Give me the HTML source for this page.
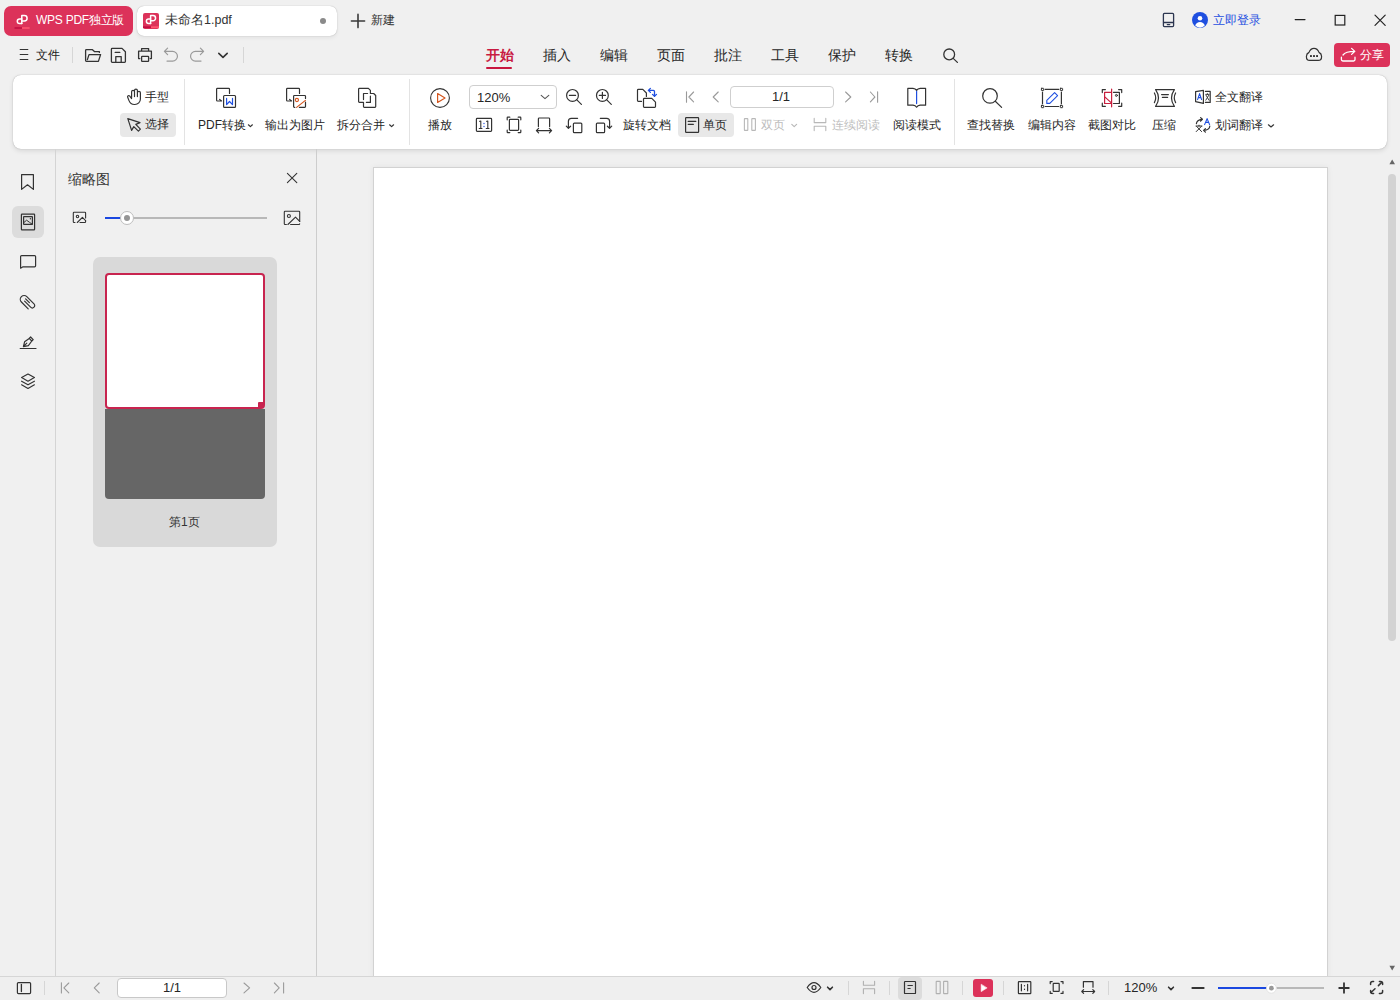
<!DOCTYPE html>
<html><head><meta charset="utf-8">
<style>
html,body{margin:0;padding:0}
body{width:1400px;height:1000px;overflow:hidden;position:relative;background:#f0f0f0;font-family:"Liberation Sans",sans-serif;color:#262626}
.a{position:absolute}
.t{position:absolute;white-space:nowrap;line-height:16px}
.f12{font-size:12px}.f13{font-size:13px}.f14{font-size:14px}
svg{position:absolute;overflow:visible}
.s{fill:none;stroke:#333;stroke-width:1.2}
.sep{position:absolute;width:1px;background:#d6d6d6}
</style></head><body>

<!-- ===== TITLE BAR ===== -->
<div class="a" style="left:4px;top:6px;width:129px;height:30px;border-radius:7px;background:#dc325a"></div>
<div class="t f12" style="left:36px;top:12px;color:#fff;letter-spacing:-0.25px">WPS PDF独立版</div>
<div class="a" style="left:137px;top:6px;width:200px;height:30px;border-radius:7px;background:#fff;box-shadow:0 0 1px rgba(0,0,0,.34),0 2px 4px rgba(0,0,0,.06)"></div>
<div class="t" style="left:165px;top:12px;color:#333;font-size:12.5px">未命名1.pdf</div>
<div class="a" style="left:320px;top:18px;width:6px;height:6px;border-radius:3px;background:#8a8a8a"></div>
<div class="t" style="left:371px;top:12px;color:#333;font-size:12px">新建</div>
<div class="t f12" style="left:1213px;top:12px;color:#1f4fe0">立即登录</div>

<!-- ===== MENU ROW ===== -->
<div class="t" style="left:36px;top:47px;color:#222;font-size:12px">文件</div>
<div class="sep" style="left:72px;top:47px;height:16px"></div>
<div class="sep" style="left:243px;top:47px;height:16px"></div>
<div class="t f14" style="left:486px;top:47px;color:#c81a42;font-weight:bold">开始</div>
<div class="a" style="left:486px;top:67px;width:26px;height:2px;background:#c8173f;border-radius:1px"></div>
<div class="t f14" style="left:543px;top:47px">插入</div>
<div class="t f14" style="left:600px;top:47px">编辑</div>
<div class="t f14" style="left:657px;top:47px">页面</div>
<div class="t f14" style="left:714px;top:47px">批注</div>
<div class="t f14" style="left:771px;top:47px">工具</div>
<div class="t f14" style="left:828px;top:47px">保护</div>
<div class="t f14" style="left:885px;top:47px">转换</div>
<div class="a" style="left:1334px;top:43px;width:56px;height:24px;border-radius:4px;background:#dc325a"></div>
<div class="t f12" style="left:1360px;top:47px;color:#fff">分享</div>

<!-- ===== RIBBON ===== -->
<div class="a" style="left:13px;top:75px;width:1374px;height:74px;border-radius:8px;background:#fff;box-shadow:0 0 1px rgba(0,0,0,.36),0 2px 5px rgba(0,0,0,.1)"></div>
<div class="a" style="left:120px;top:113px;width:56px;height:24px;border-radius:4px;background:#e8e8e8"></div>
<div class="t f12" style="left:145px;top:89px">手型</div>
<div class="t f12" style="left:145px;top:116px">选择</div>
<div class="sep" style="left:184px;top:79px;height:66px;background:#e3e3e3"></div>
<div class="t f12" style="left:198px;top:117px">PDF转换</div>
<div class="t f12" style="left:265px;top:117px">输出为图片</div>
<div class="t f12" style="left:337px;top:117px">拆分合并</div>
<div class="sep" style="left:409px;top:79px;height:66px;background:#e3e3e3"></div>
<div class="t f12" style="left:428px;top:117px">播放</div>
<div class="a" style="left:469px;top:85px;width:86px;height:22px;border:1px solid #cfcfcf;border-radius:4px;background:#fff"></div>
<div class="t f13" style="left:477px;top:90px">120%</div>
<div class="t f12" style="left:623px;top:117px">旋转文档</div>
<div class="a" style="left:730px;top:86px;width:102px;height:20px;border:1px solid #cfcfcf;border-radius:4px;background:#fff"></div>
<div class="t f13" style="left:772px;top:89px">1/1</div>
<div class="a" style="left:678px;top:113px;width:56px;height:24px;border-radius:4px;background:#e8e8e8"></div>
<div class="t f12" style="left:703px;top:117px">单页</div>
<div class="t f12" style="left:761px;top:117px;color:#bdbdbd">双页</div>
<div class="t f12" style="left:832px;top:117px;color:#bdbdbd">连续阅读</div>
<div class="t f12" style="left:893px;top:117px">阅读模式</div>
<div class="sep" style="left:954px;top:79px;height:66px;background:#e3e3e3"></div>
<div class="t f12" style="left:967px;top:117px">查找替换</div>
<div class="t f12" style="left:1028px;top:117px">编辑内容</div>
<div class="t f12" style="left:1088px;top:117px">截图对比</div>
<div class="t f12" style="left:1152px;top:117px">压缩</div>
<div class="t f12" style="left:1215px;top:89px">全文翻译</div>
<div class="t f12" style="left:1215px;top:117px">划词翻译</div>

<!-- ===== LEFT SIDEBAR ===== -->
<div class="a" style="left:55px;top:149px;width:1px;height:827px;background:#d4d4d4"></div>
<div class="a" style="left:12px;top:206px;width:32px;height:32px;border-radius:6px;background:#dcdcdc"></div>

<!-- ===== THUMB PANEL ===== -->
<div class="a" style="left:316px;top:149px;width:1px;height:827px;background:#cdcdcd"></div>
<div class="t f14" style="left:68px;top:171px;color:#333">缩略图</div>
<div class="a" style="left:105px;top:217px;width:162px;height:2px;background:#b8b8b8"></div>
<div class="a" style="left:105px;top:217px;width:20px;height:2px;background:#1a47e0"></div>
<div class="a" style="left:120px;top:211px;width:12px;height:12px;border-radius:7px;border:1px solid #bdbdbd;background:#fff"></div>
<div class="a" style="left:124px;top:215px;width:6px;height:6px;border-radius:3px;background:#959595"></div>
<div class="a" style="left:93px;top:257px;width:184px;height:290px;border-radius:7px;background:#d9d9d9"></div>
<div class="a" style="left:105px;top:409px;width:160px;height:90px;border-radius:0 0 4px 4px;background:#666"></div>
<div class="a" style="left:105px;top:273px;width:156px;height:132px;border:2px solid #c8244f;border-radius:4px;background:#fff"></div>
<div class="t f12" style="left:169px;top:514px;color:#333">第1页</div>

<!-- ===== DOC AREA ===== -->
<div class="a" style="left:373px;top:167px;width:953px;height:820px;border:1px solid #d2d2d2;background:#fff;box-shadow:0 0 6px rgba(0,0,0,.06)"></div>
<div class="a" style="left:1388px;top:174px;width:8px;height:467px;border-radius:4px;background:#d3d3d3"></div>

<!-- ===== STATUS BAR ===== -->
<div class="a" style="left:0;top:976px;width:1400px;height:24px;background:#efefef;border-top:1px solid #d6d6d6"></div>
<div class="a" style="left:117px;top:978px;width:108px;height:18px;border:1px solid #c8c8c8;border-radius:4px;background:#fff"></div>
<div class="t f13" style="left:163px;top:980px">1/1</div>
<div class="sep" style="left:44px;top:981px;height:14px"></div><div class="sep" style="left:848px;top:981px;height:14px"></div><div class="sep" style="left:889px;top:981px;height:14px"></div><div class="sep" style="left:962px;top:981px;height:14px"></div><div class="sep" style="left:1003px;top:981px;height:14px"></div><div class="sep" style="left:1108px;top:981px;height:14px"></div>
<div class="a" style="left:898px;top:977px;width:24px;height:23px;border-radius:4px;background:#dcdcdc"></div>
<div class="a" style="left:973px;top:979px;width:20px;height:18px;border-radius:3px;background:#dc325a"></div>
<div class="t f13" style="left:1124px;top:980px">120%</div>
<div class="a" style="left:1218px;top:987px;width:106px;height:2px;background:#b8b8b8"></div>
<div class="a" style="left:1218px;top:987px;width:52px;height:2px;background:#1a47e0"></div>


<svg width="1400" height="1000" viewBox="0 0 1400 1000" style="left:0;top:0" fill="none" stroke-linecap="round" stroke-linejoin="round">
<!-- title: red tab logo -->
<g stroke="#fff" stroke-width="1.5">
<path d="M21.8 23.6 V15.6 H24.4 A2.7 2.7 0 0 1 24.4 21 H21.8"/>
<path d="M21.8 23.6 H19.6 A2.3 2.3 0 0 1 19.6 19 H21.8"/>
</g>
<path d="M14.5 28 H22" stroke="#c20d42" stroke-width="1.6" stroke-linecap="butt"/>
<path d="M22 28 H29.6" stroke="#ff5470" stroke-width="1.6" stroke-linecap="butt"/>
<!-- white tab icon -->
<rect x="143" y="13" width="16" height="16" rx="2" fill="#dc325a" stroke="none"/>
<path d="M143 27.2 H151" stroke="#c20d42" stroke-width="1.8" stroke-linecap="butt"/>
<path d="M151 27.2 H159" stroke="#ff5470" stroke-width="1.8" stroke-linecap="butt"/>
<g stroke="#fff" stroke-width="1.5">
<path d="M150.6 23.4 V15.6 H153 A2.55 2.55 0 0 1 153 20.7 H150.6"/>
<path d="M150.6 23.4 H148.6 A2.2 2.2 0 0 1 148.6 19 H150.6"/>
</g>
<!-- plus -->
<path d="M358 14.4 V27.6 M351.4 21 H364.6" stroke="#3a3a3a" stroke-width="1.6"/>
<!-- tablet -->
<g stroke="#2c3650" stroke-width="1.3">
<rect x="1163.4" y="13.4" width="10.2" height="13.2" rx="1"/>
<path d="M1163.6 22.5 H1173.4"/>
<path d="M1167.3 24.6 H1169.7"/>
</g>
<!-- avatar -->
<circle cx="1200" cy="20" r="8" fill="#1f4fe0" stroke="none"/>
<circle cx="1200" cy="18.2" r="2.3" fill="#fff" stroke="none"/>
<path d="M1195.2 25.6 Q1196.4 22.1 1200 22.1 Q1203.6 22.1 1204.8 25.6 Q1202.8 27.7 1200 27.7 Q1197.2 27.7 1195.2 25.6 Z" fill="#fff" stroke="none"/>
<!-- min max close -->
<path d="M1295.2 19.6 H1305" stroke="#222" stroke-width="1.2"/>
<rect x="1335.2" y="15.4" width="9.6" height="9.6" stroke="#222" stroke-width="1.2" stroke-linejoin="miter"/>
<path d="M1375 15.2 L1385.2 25.4 M1385.2 15.2 L1375 25.4" stroke="#222" stroke-width="1.2"/>

<!-- menu row -->
<path d="M20.2 49.5 H27.8 M20.2 54.5 H27.8 M20.2 59.5 H27.8" stroke="#333" stroke-width="1.2"/>
<g stroke="#333" stroke-width="1.3">
<path d="M99.4 52.4 V51.6 H94.4 L92.2 49.6 H86.4 Q85.6 49.6 85.6 50.4 V60.6 Q85.6 61.4 86.4 61.4 H98.4 L100.6 54.6 H89 L87.4 59.6"/>
<path d="M112.2 48.4 H122 L125.4 51.8 V61.6 Q125.4 62.4 124.6 62.4 H112.2 Q111.4 62.4 111.4 61.6 V49.2 Q111.4 48.4 112.2 48.4 Z M115.2 52.4 H119.8 M115.8 62.2 V56.6 H121.2 V62.2"/>
<path d="M141.6 51 V48.6 H148.6 V51 M139.8 58.6 H138.6 V51.2 H151.4 V58.6 H150.2"/>
<rect x="141.6" y="56.4" width="7" height="5" rx="0.6"/>
</g>
<g stroke="#9a9a9a" stroke-width="1.2">
<path d="M167.6 48.2 L164.4 51.4 L167.6 54.6 M164.6 51.4 H172.6 A4.85 4.85 0 0 1 172.6 61.1 H167"/>
<path d="M200.4 48.2 L203.6 51.4 L200.4 54.6 M203.4 51.4 H195.4 A4.85 4.85 0 0 0 195.4 61.1 H201"/>
</g>
<path d="M218.8 53.3 L223 57.3 L227.2 53.3" stroke="#333" stroke-width="1.6"/>
<!-- search tab -->
<g stroke="#333" stroke-width="1.3">
<circle cx="949.2" cy="54.4" r="5.4"/>
<path d="M953.2 58.4 L957.4 62.4"/>
</g>
<!-- cloud -->
<g stroke="#333" stroke-width="1.2">
<path d="M1309.6 60.4 H1318.2 C1320.4 60.4 1321.6 58.6 1321.6 56.4 C1321.6 54.6 1320.6 53.2 1319 52.4 C1318 49.8 1316.2 48.4 1314 48.4 C1311.8 48.4 1310 49.8 1309 52.4 C1307.4 53.2 1306.4 54.6 1306.4 56.4 C1306.4 58.6 1307.6 60.4 1309.6 60.4 Z"/>
</g>
<g fill="#333" stroke="none">
<rect x="1310" y="55.1" width="1.9" height="1.9"/><rect x="1313.05" y="55.1" width="1.9" height="1.9"/><rect x="1316.1" y="55.1" width="1.9" height="1.9"/>
</g>
<!-- share icon -->
<g stroke="#fff" stroke-width="1.3">
<path d="M1343 55 Q1345.6 51.4 1354.6 51.4 M1351.6 48.4 L1354.8 51.4 L1351.6 54.4"/>
<path d="M1341.4 57.2 V59.6 Q1341.4 61 1342.8 61 H1353.6 Q1355 61 1355 59.6 V57.2"/>
</g>

<!-- ===== ribbon icons ===== -->
<g stroke="#333" stroke-width="1.2">
<!-- hand -->
<path d="M131.6 97.4 V91.8 A1.45 1.45 0 0 1 134.5 91.8 V96.6 M134.5 91.6 V90.6 A1.45 1.45 0 0 1 137.4 90.6 V96.6 M137.4 92.8 A1.5 1.5 0 0 1 140.4 92.8 V99 A5.5 5.5 0 0 1 134.9 104.5 H134.4 A6 6 0 0 1 129 100.6 L127.6 97 A1.2 1.2 0 0 1 129.6 95.9 L131.6 98.6"/>
<!-- cursor -->
<path d="M127.8 118.6 L140 122.6 L135.8 124.4 L140.4 129.2 L138.4 131.2 L133.8 126.6 L131.6 130.4 Z"/>
<!-- pdf->word -->
<path d="M229.5 93.4 V89.2 Q229.5 88.4 228.7 88.4 H217.4 Q216.6 88.4 216.6 89.2 V100.2 Q216.6 101 217.4 101 H221.6 L219.6 99.4"/>
<rect x="223.6" y="95.5" width="11.9" height="11.9" rx="0.9"/>
<!-- export image -->
<path d="M299.5 93.4 V89.2 Q299.5 88.4 298.7 88.4 H287.4 Q286.6 88.4 286.6 89.2 V100.2 Q286.6 101 287.4 101 H291.6 L289.6 99.4"/>
<path d="M305.5 98.4 V96.3 Q305.5 95.5 304.7 95.5 H294.4 Q293.6 95.5 293.6 96.3 V106.6 Q293.6 107.4 294.4 107.4 H294.8 M299.4 107.4 H304.7 Q305.5 107.4 305.5 106.6 V102.2"/>
<!-- split merge -->
<path d="M370.4 93.5 V90.4 L368.4 88.4 H359.4 Q358.6 88.4 358.6 89.2 V101.6 Q358.6 102.4 359.4 102.4 H363.5 V106.6 Q363.5 107.4 364.3 107.4 H374.9 Q375.7 107.4 375.7 106.6 V95.5 L373.7 93.5 H370.4"/>
<path d="M367.6 93.5 H363.5 V99.6 M370.4 96.2 V102.4 H366.4"/>
<!-- play -->
<circle cx="440" cy="98" r="9.4" stroke-width="1.1"/>
<!-- zoom out/in -->
<circle cx="572.5" cy="95.4" r="5.9"/><path d="M576.6 99.6 L581.4 104.4 M569.4 95.4 H575.6"/>
<circle cx="602.4" cy="95.4" r="5.9"/><path d="M606.5 99.6 L611.3 104.4 M599.3 95.4 H605.5 M602.4 92.3 V98.5"/>
<!-- rotate doc -->
<path d="M646.4 96.5 V93 L642.8 89.4 H638.3 Q637.5 89.4 637.5 90.2 V100.6 Q637.5 101.4 638.3 101.4 H641.5"/>
<path d="M644.3 98.4 H651.8 L655.5 102.1 V106.6 Q655.5 107.4 654.7 107.4 H644.3 Q643.5 107.4 643.5 106.6 V99.2 Q643.5 98.4 644.3 98.4 Z"/>
<!-- 1:1 -->
<rect x="476.4" y="118.4" width="15.2" height="13" rx="0.8"/>
<!-- fit page -->
<rect x="509.4" y="119.3" width="9.2" height="11" rx="0.8"/>
<path d="M507.2 119.8 V117.8 Q507.2 117.2 507.8 117.2 H509.8 M518.2 117.2 H520.2 Q520.8 117.2 520.8 117.8 V119.8 M520.8 130 V132 Q520.8 132.6 520.2 132.6 H518.2 M509.8 132.6 H507.8 Q507.2 132.6 507.2 132 V130"/>
<!-- fit width -->
<path d="M538.4 126.6 V118.8 Q538.4 118 539.2 118 H548.8 Q549.6 118 549.6 118.8 V126.6 M536.4 130.6 H551.6 M538.6 128.4 L536.4 130.6 L538.6 132.8 M549.4 128.4 L551.6 130.6 L549.4 132.8"/>
<!-- rotate left/right -->
<rect x="573.4" y="123.2" width="8.4" height="9.4" rx="0.9"/>
<path d="M577.6 118.3 H571.4 A3 3 0 0 0 568.4 121.3 V128.2 M566.3 126.2 L568.4 128.3 L570.6 126.2"/>
<rect x="596.4" y="123.2" width="8.2" height="9.4" rx="0.9"/>
<path d="M600.3 118.3 H606.6 A3 3 0 0 1 609.6 121.3 V128.2 M607.4 126.2 L609.6 128.3 L611.7 126.2"/>
<!-- dan ye -->
<rect x="685.6" y="117.6" width="13" height="14.8" rx="0.6"/>
<path d="M688.2 121.4 H695.8 M688.2 124.3 H693.4"/>
<!-- book -->
<path d="M907.8 88.4 H913 Q915.5 88.6 916.6 90.4 Q917.7 88.6 920.2 88.4 H925.6 V105.2 H920.2 Q917.7 105.4 916.6 107.2 Q915.5 105.4 913 105.2 H907.8 Z"/>
<!-- search big -->
<circle cx="990" cy="95.9" r="7.3"/><path d="M995.3 101.2 L1001.6 107.4"/>
<!-- edit content frame -->
<path d="M1045.2 89.4 H1058.7 M1045.2 106.5 H1058.7 M1042.5 92 V103.8 M1061.4 92 V103.8"/>
<rect x="1041.4" y="88.3" width="2.3" height="2.3" rx="0.3" stroke-width="1"/>
<rect x="1060.3" y="88.3" width="2.3" height="2.3" rx="0.3" stroke-width="1"/>
<rect x="1041.4" y="105.4" width="2.3" height="2.3" rx="0.3" stroke-width="1"/>
<rect x="1060.3" y="105.4" width="2.3" height="2.3" rx="0.3" stroke-width="1"/>
<!-- jietu duibi brackets -->
<path d="M1102.3 92.6 V89.6 H1105.4 M1118.6 89.6 H1121.7 V92.6 M1121.7 103.2 V106.3 H1118.6 M1105.4 106.3 H1102.3 V103.2"/>
<path d="M1113.4 92.3 H1119.4 V103.5 H1113.4"/>
<circle cx="1116.4" cy="95.4" r="1" stroke-width="1"/>
<!-- compress -->
<path d="M1155.6 89.6 H1174.4 Q1168.6 98 1174.4 106.4 H1155.6 Q1161.4 98 1155.6 89.6 Z M1161.6 94.6 H1168.4 M1162.4 97.4 H1167.6"/>
<path d="M1154.4 93 Q1157 97.8 1154.4 102.6 M1175.6 93 Q1173 97.8 1175.6 102.6"/>
<!-- full translate -->
<path d="M1195.6 91.6 L1203.4 90.4 V103.4 L1195.6 101.6 Z M1205.4 91.4 H1210.2 V102.4 H1205.4"/>
<path d="M1205.8 94.4 H1209 M1207.4 93.6 V94.4 M1206 95.2 L1209 100.2 M1208.8 95.2 L1205.8 100.2" stroke-width="0.9"/>
<!-- word translate -->
<path d="M1196.4 123.6 Q1196.8 120 1202 119.4 M1200.6 117.6 L1202.4 119.3 L1200.6 121.2"/>
<path d="M1209.8 126.2 Q1209.4 130 1203.8 130.4 M1205.4 128.6 L1203.6 130.4 L1205.4 132.2"/>
<path d="M1196 126 H1202 M1199 125.2 V126 M1196.6 126.4 L1201.6 131.6 M1201.4 126.4 L1196.2 131.6" stroke-width="1"/>
</g>
<!-- blue W -->
<path d="M226.6 98.4 V104.6 L229.5 101.5 L232.5 104.6 V98.4" stroke="#1f4fe0" stroke-width="1.2"/>
<!-- orange export -->
<circle cx="296.9" cy="100" r="1.6" stroke="#d4561e" stroke-width="1.1"/>
<path d="M296.6 107.4 L305.4 100.4" stroke="#d4561e" stroke-width="1.2"/>
<!-- play triangle -->
<path d="M437.6 93.6 V102.4 L445 98 Z" stroke="#d4561e" stroke-width="1.2"/>
<!-- dropdown chevron -->
<path d="M541.2 95.4 L545 98.6 L548.8 95.4" stroke="#555" stroke-width="1.1"/>
<!-- rotate doc blue -->
<g stroke="#1f4fe0" stroke-width="1.3">
<path d="M650.4 88.4 L648.3 90.4 L650.4 92.4 M648.4 90.4 H653.4 Q654.5 90.4 654.5 91.5 V96.4 M652.5 94.4 L654.5 96.4 L656.5 94.4"/>
</g>
<!-- 1:1 glyphs -->
<g stroke="#333" stroke-width="1.1" stroke-linecap="butt">
<path d="M479.2 121.6 L480.8 121 V128.5 M478.8 128.5 H482.4"/>
<path d="M486.2 121.6 L487.8 121 V128.5 M485.8 128.5 H489.4"/>
</g>
<path d="M484 123.4 V123.6 M484 126.4 V126.6" stroke="#1f4fe0" stroke-width="1.3"/>
<!-- nav gray -->
<g stroke="#9a9a9a" stroke-width="1.1">
<path d="M686.5 91.8 V102.2 M693.6 92 L688.9 97 L693.6 101.8"/>
<path d="M718.2 92 L713.2 97 L718.2 101.8"/>
<path d="M845.6 92 L850.8 97 L845.6 101.8"/>
<path d="M870.4 92 L874.9 97 L870.4 101.8 M877.6 91.8 V102.2"/>
</g>
<!-- shuang ye / lianxu gray -->
<g stroke="#b8b8b8" stroke-width="1.1">
<rect x="744.4" y="118.6" width="3.4" height="11.8" rx="0.4"/>
<rect x="751.8" y="118.6" width="3.6" height="11.8" rx="0.4"/>
<path d="M791.8 124.4 L794.2 126.6 L796.6 124.4" stroke-width="1.2"/>
<path d="M814.2 118.4 V122.6 H825.8 V118.4 M814.2 130.6 V126.2 H825.8 V130.6"/>
</g>
<path d="M916.6 91.4 V103.6" stroke="#1f4fe0" stroke-width="1.2"/>
<!-- pencil blue -->
<path d="M1046.8 100.4 L1054.6 92.6 L1057.6 95.6 L1049.8 103.4 H1046.8 Z" stroke="#1f4fe0" stroke-width="1.1"/>
<!-- red jietu -->
<g stroke="#c8203f" stroke-width="1.2">
<path d="M1111.5 92.3 H1104.6 V103.5 H1111.5 M1104.8 96.9 L1110.8 102.4"/>
<path d="M1111.6 89.2 V106.8"/>
</g>
<!-- blue A glyphs -->
<path d="M1197.6 99.6 L1199.6 93.6 L1201.6 99.6 M1198.4 97.6 H1200.8" stroke="#1f4fe0" stroke-width="1.1"/>
<path d="M1204.6 124.6 L1207.1 118.6 L1209.6 124.6 M1205.6 122.4 H1208.6" stroke="#1f4fe0" stroke-width="1.1"/>
<g stroke="#333" stroke-width="1.2">
<path d="M248.4 124.8 L250.4 126.6 L252.4 124.8"/>
<path d="M389.6 124.8 L391.6 126.6 L393.6 124.8"/>
<path d="M1268.4 124.8 L1271 127 L1273.6 124.8"/>
</g>

<!-- ===== sidebar ===== -->
<g stroke="#333" stroke-width="1.2">
<path d="M21.6 174.6 H33.4 V189.4 L27.5 184.8 L21.6 189.4 Z"/>
<rect x="21.4" y="214.2" width="13.2" height="15.6" rx="0.6"/>
<rect x="23.6" y="216.6" width="8.8" height="7.8" rx="0.4"/>
<path d="M23.8 222.6 L26.6 220.2 L29.6 222.4 L32.2 224.2" stroke-width="1"/>
<path d="M20.6 268.2 V256.6 Q20.6 255.6 21.6 255.6 H34.6 Q35.6 255.6 35.6 256.6 V265.8 Q35.6 266.8 34.6 266.8 H23 Z"/>
<path d="M24.6 301.2 L30.6 307.2 A2.4 2.4 0 0 0 34 303.8 L26.8 296.6 A3.8 3.8 0 0 0 21.4 302 L28.2 308.8 M29.4 302.6 L25.6 298.8"/>
<path d="M20.2 348.5 H36"/>
<path d="M23.4 346.6 L24.6 341.8 L29.2 338.4 L31.8 341 L28.4 345.6 Z M23.6 346.4 L26.8 343.2 M29.2 338.4 L30.6 337 L33.2 339.6 L31.8 341"/>
<path d="M28 374 L34.4 377.6 L28 381.2 L21.6 377.6 Z M21.6 381.2 L28 384.8 L34.4 381.2 M21.6 384.8 L28 388.4 L34.4 384.8"/>
</g>
<circle cx="30.4" cy="218.8" r="0.7" fill="#333" stroke="none"/>

<!-- ===== thumb panel ===== -->
<g stroke="#333" stroke-width="1.1">
<path d="M287.4 173.4 L296.8 182.6 M296.8 173.4 L287.4 182.6"/>
<path d="M85.6 218 V213 Q85.6 212.3 84.9 212.3 H74 Q73.3 212.3 73.3 213 V221.8 Q73.3 222.5 74 222.5 H75 M80 222.5 H84.9 Q85.6 222.5 85.6 221.8 V220.6"/>
<circle cx="77.5" cy="216.5" r="1.2"/>
<path d="M77.3 222.5 L82.4 217.3 L85.6 220.6"/>
<path d="M299.7 221.4 V212 Q299.7 211.3 299 211.3 H285 Q284.3 211.3 284.3 212 V223.8 Q284.3 224.5 285 224.5 H286.4 M290.6 224.5 H299 Q299.7 224.5 299.7 223.8"/>
<circle cx="288.9" cy="216" r="1.5"/>
<path d="M287.9 224.5 L295.5 217.2 L299.7 221.4"/>
</g>
<rect x="258" y="402" width="6" height="6" rx="1" fill="#c8244f" stroke="none"/>

<!-- ===== scroll arrows ===== -->
<path d="M1389.4 164.2 L1392.2 159.6 L1395 164.2 Z" fill="#666" stroke="none"/>
<path d="M1389.4 965.8 L1392.2 970.4 L1395 965.8 Z" fill="#666" stroke="none"/>

<!-- ===== status bar ===== -->
<g stroke="#333" stroke-width="1.2">
<rect x="17.4" y="982.6" width="13.2" height="11" rx="1"/>
<path d="M21.4 984.4 V991.6" stroke-width="1.3"/>
<path d="M807.2 987.5 Q814 977.8 820.8 987.5 Q814 997.2 807.2 987.5 Z"/>
<circle cx="814" cy="987.5" r="2"/>
<path d="M827.6 987.2 L830 989.6 L832.4 987.2" stroke-width="1.6"/>
<rect x="904.5" y="981.5" width="11" height="12" rx="0.6"/>
<path d="M907.5 985.5 H912.8 M907.5 988.5 H910.6" stroke-linecap="butt"/>
<rect x="1018.4" y="981.6" width="12.4" height="12" rx="0.6"/>
<path d="M1021.4 984.4 V990.8 M1027.6 984.4 V990.8 M1024.5 985.6 V985.8 M1024.5 989.2 V989.4"/>
<rect x="1053.2" y="983.4" width="6" height="8" rx="0.5"/>
<path d="M1050.2 983.6 V981.6 H1052.2 M1061 981.6 H1063 V983.6 M1063 991.4 V993.4 H1061 M1052.2 993.4 H1050.2 V991.4"/>
<path d="M1083.4 987.2 V981.6 H1093 V987.2 M1081.8 991.5 H1094.6 M1083.6 989.6 L1081.8 991.5 L1083.6 993.4 M1092.8 989.6 L1094.6 991.5 L1092.8 993.4"/>
<path d="M1168.6 987.2 L1171 989.6 L1173.4 987.2" stroke-width="1.6"/>
<path d="M1192.4 987.9 H1203.6" stroke-width="2"/>
<path d="M1344 983.2 V992.8 M1339.2 988 H1348.8" stroke-width="1.8"/>
<path d="M1370.6 984.4 V983.4 A2 2 0 0 1 1372.6 981.4 H1373.6 M1379.4 981.4 H1380.6 A2 2 0 0 1 1382.6 983.4 V984.4 M1382.6 990.4 V991.4 A2 2 0 0 1 1380.6 993.4 H1379.4 M1373.6 993.4 H1372.6 A2 2 0 0 1 1370.6 991.4 V990.4 M1378.4 985.6 L1381.4 982.6 M1371.8 991.8 L1375 988.8" stroke-width="1.5"/>
</g>
<g stroke="#9a9a9a" stroke-width="1.1">
<path d="M61.4 982.8 V993 M68.8 983 L63.9 987.8 L68.8 992.8"/>
<path d="M99.2 983 L94.3 987.8 L99.2 992.8"/>
<path d="M244 983 L249.6 987.8 L244 992.8"/>
<path d="M274.4 983 L279.2 987.8 L274.4 992.8 M283.6 982.8 V993"/>
</g>
<g stroke="#b0b0b0" stroke-width="1.1">
<path d="M863.4 981.2 V985.2 H874.6 V981.2 M863.4 993.6 V988.8 H874.6 V993.6"/>
<rect x="936.2" y="981.4" width="4" height="12.2" rx="0.4"/>
<rect x="943.6" y="981.4" width="4.2" height="12.2" rx="0.4"/>
</g>
<path d="M981.2 984.6 V991.6 L986.8 988.1 Z" fill="#fff" stroke="#fff" stroke-width="0.6"/>
<circle cx="1271.4" cy="988.2" r="5" fill="#fff" stroke="#dedede" stroke-width="0.8"/>
<circle cx="1271.4" cy="988.2" r="2.4" fill="#999" stroke="none"/>
</svg>

</body></html>
